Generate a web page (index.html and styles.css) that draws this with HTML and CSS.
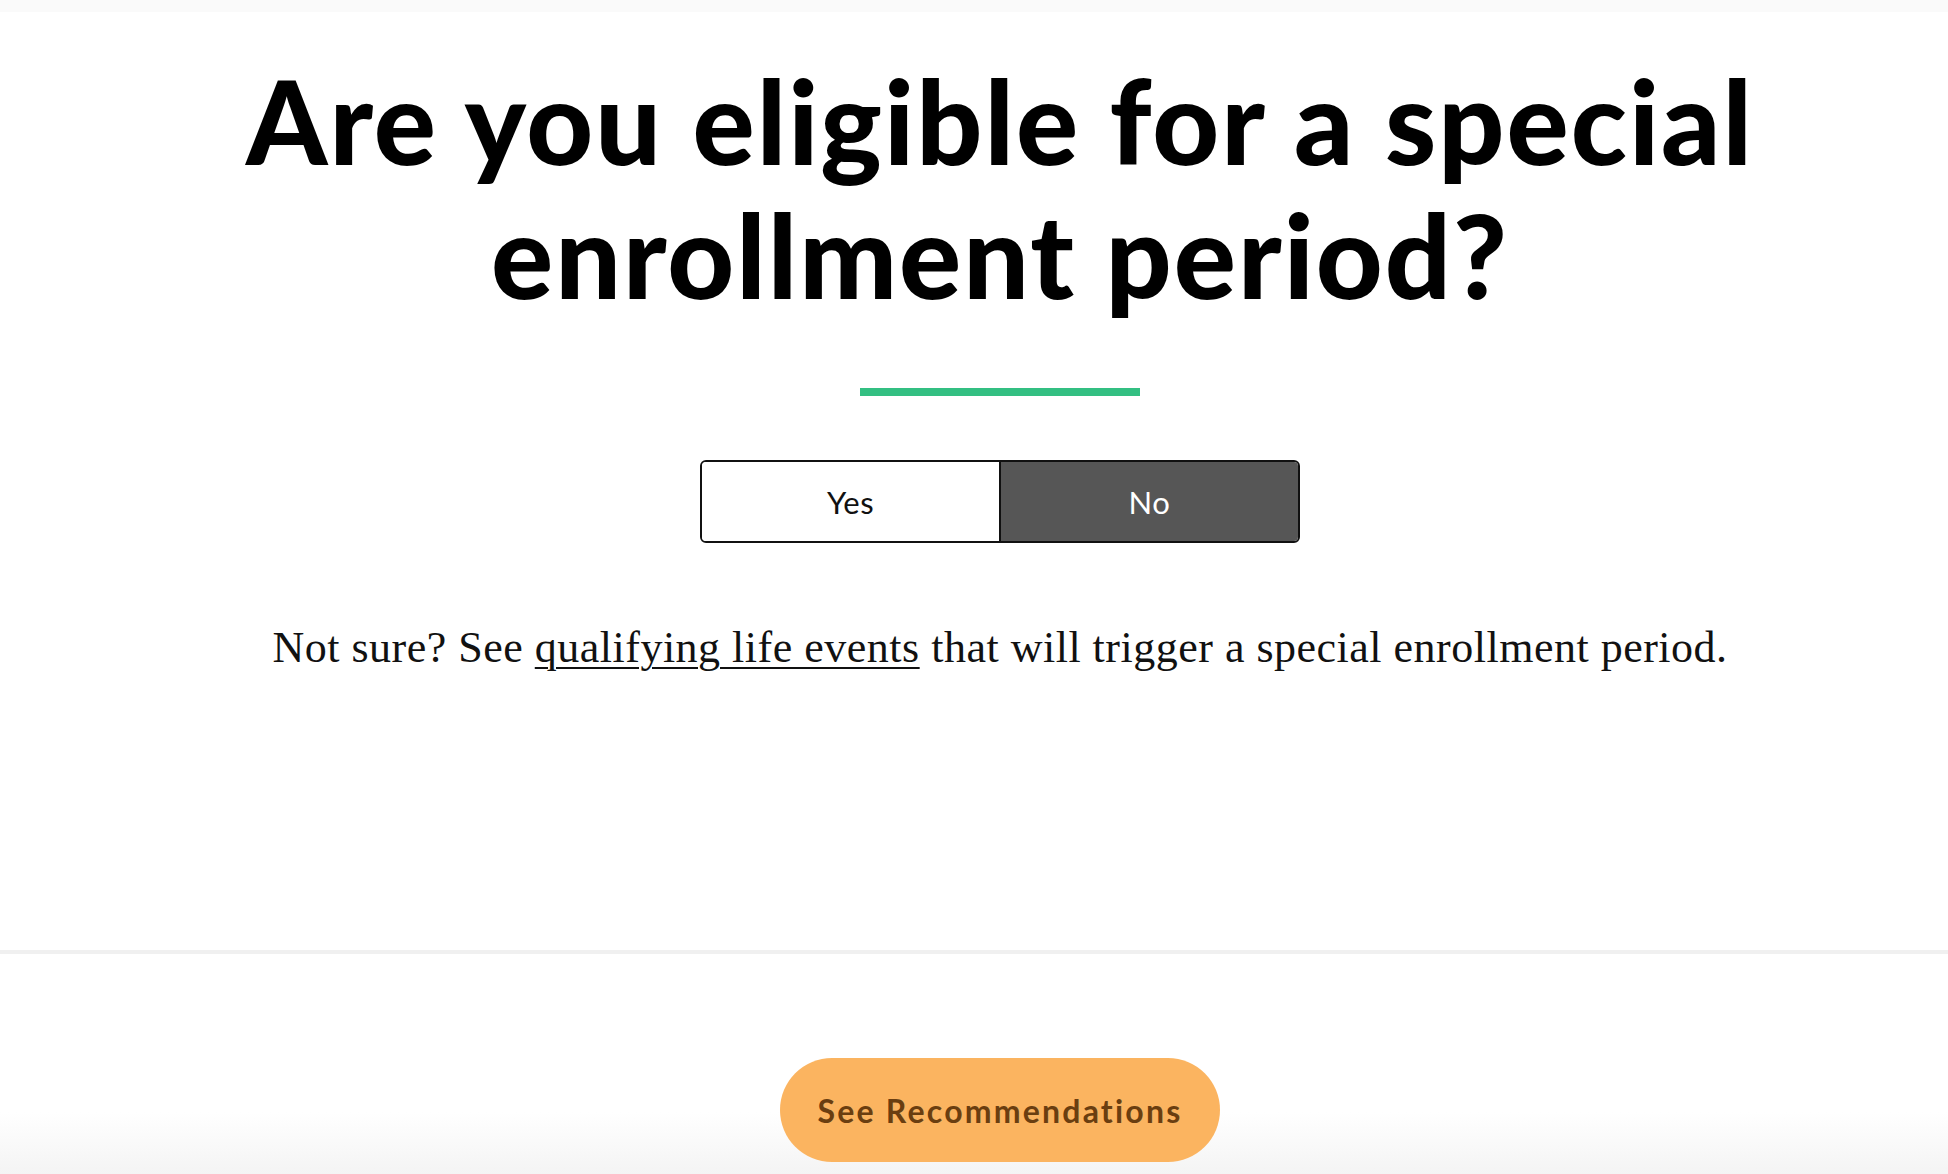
FILE: index.html
```html
<!DOCTYPE html>
<html lang="en">
<head>
<meta charset="utf-8">
<title>Special enrollment period</title>
<link rel="stylesheet" href="styles.css">
</head>
<body>
<div class="topbar"></div>
<main class="question">
  <h1 class="title">Are you eligible for a special<br>enrollment period?</h1>
  <div class="accent"></div>
  <div class="toggle">
    <button class="opt">Yes</button>
    <button class="opt opt-active">No</button>
  </div>
  <p class="hint">Not sure? See <a href="#" class="hint-link">qualifying life events</a> that will trigger a special enrollment period.</p>
</main>
<footer class="actions">
  <button class="cta">See Recommendations</button>
</footer>
</body>
</html>
```
FILE: styles.css
```css
html, body {
  margin: 0;
  padding: 0;
  background: #ffffff;
}
html {
  height: 1174px;
  overflow: hidden;
}
body {
  width: 1948px;
  height: 1174px;
  overflow: hidden;
  display: flex;
  flex-direction: column;
  font-family: "Lato", "Noto Sans", sans-serif;
}
.topbar {
  height: 12px;
  background: #fafafa;
  flex: none;
}
.question {
  height: 942px;
  box-sizing: border-box;
  padding-left: 52px;
  display: flex;
  flex-direction: column;
  align-items: center;
  border-bottom: 4px solid #f0f0f0;
  flex: none;
}
.title {
  margin: 42px 0 0;
  font-family: "Lato", sans-serif;
  font-weight: 900;
  font-size: 116px;
  line-height: 134px;
  letter-spacing: 2px;
  text-align: center;
  color: #000;
}
.accent {
  width: 280px;
  height: 8px;
  background: #33bf82;
  margin-top: 66px;
}
.toggle {
  margin-top: 64px;
  display: flex;
  width: 600px;
  height: 83px;
  box-sizing: border-box;
  border: 2px solid #111;
  border-radius: 6px;
  overflow: hidden;
}
.opt {
  flex: 1;
  border: 0;
  margin: 0;
  padding: 0;
  background: #fff;
  color: #111;
  font-family: "Lato", sans-serif;
  font-size: 31px;
  font-weight: 400;
  letter-spacing: 0.5px;
}
.opt + .opt {
  border-left: 2px solid #111;
}
.opt-active {
  background: #565656;
  color: #fff;
}
.hint {
  margin: 75px 0 0;
  font-family: "Liberation Serif", "Times New Roman", serif;
  font-size: 44px;
  line-height: 60px;
  letter-spacing: 0.5px;
  color: #111;
  text-align: center;
}
.hint-link {
  color: #111;
  text-decoration: underline;
  text-decoration-thickness: 2px;
  text-underline-offset: 5px;
}
.actions {
  flex: 1;
  box-sizing: border-box;
  padding-left: 52px;
  display: flex;
  justify-content: center;
  align-items: flex-start;
  padding-top: 104px;
  background: linear-gradient(to bottom, #ffffff 0%, #ffffff 72%, #f4f4f4 100%);
}
.cta {
  width: 440px;
  height: 104px;
  border: 0;
  border-radius: 52px;
  background: #fbb460;
  color: #6a3e10;
  font-family: "Lato", sans-serif;
  font-weight: 700;
  font-size: 32px;
  letter-spacing: 2.2px;
  padding: 0;
}
```
